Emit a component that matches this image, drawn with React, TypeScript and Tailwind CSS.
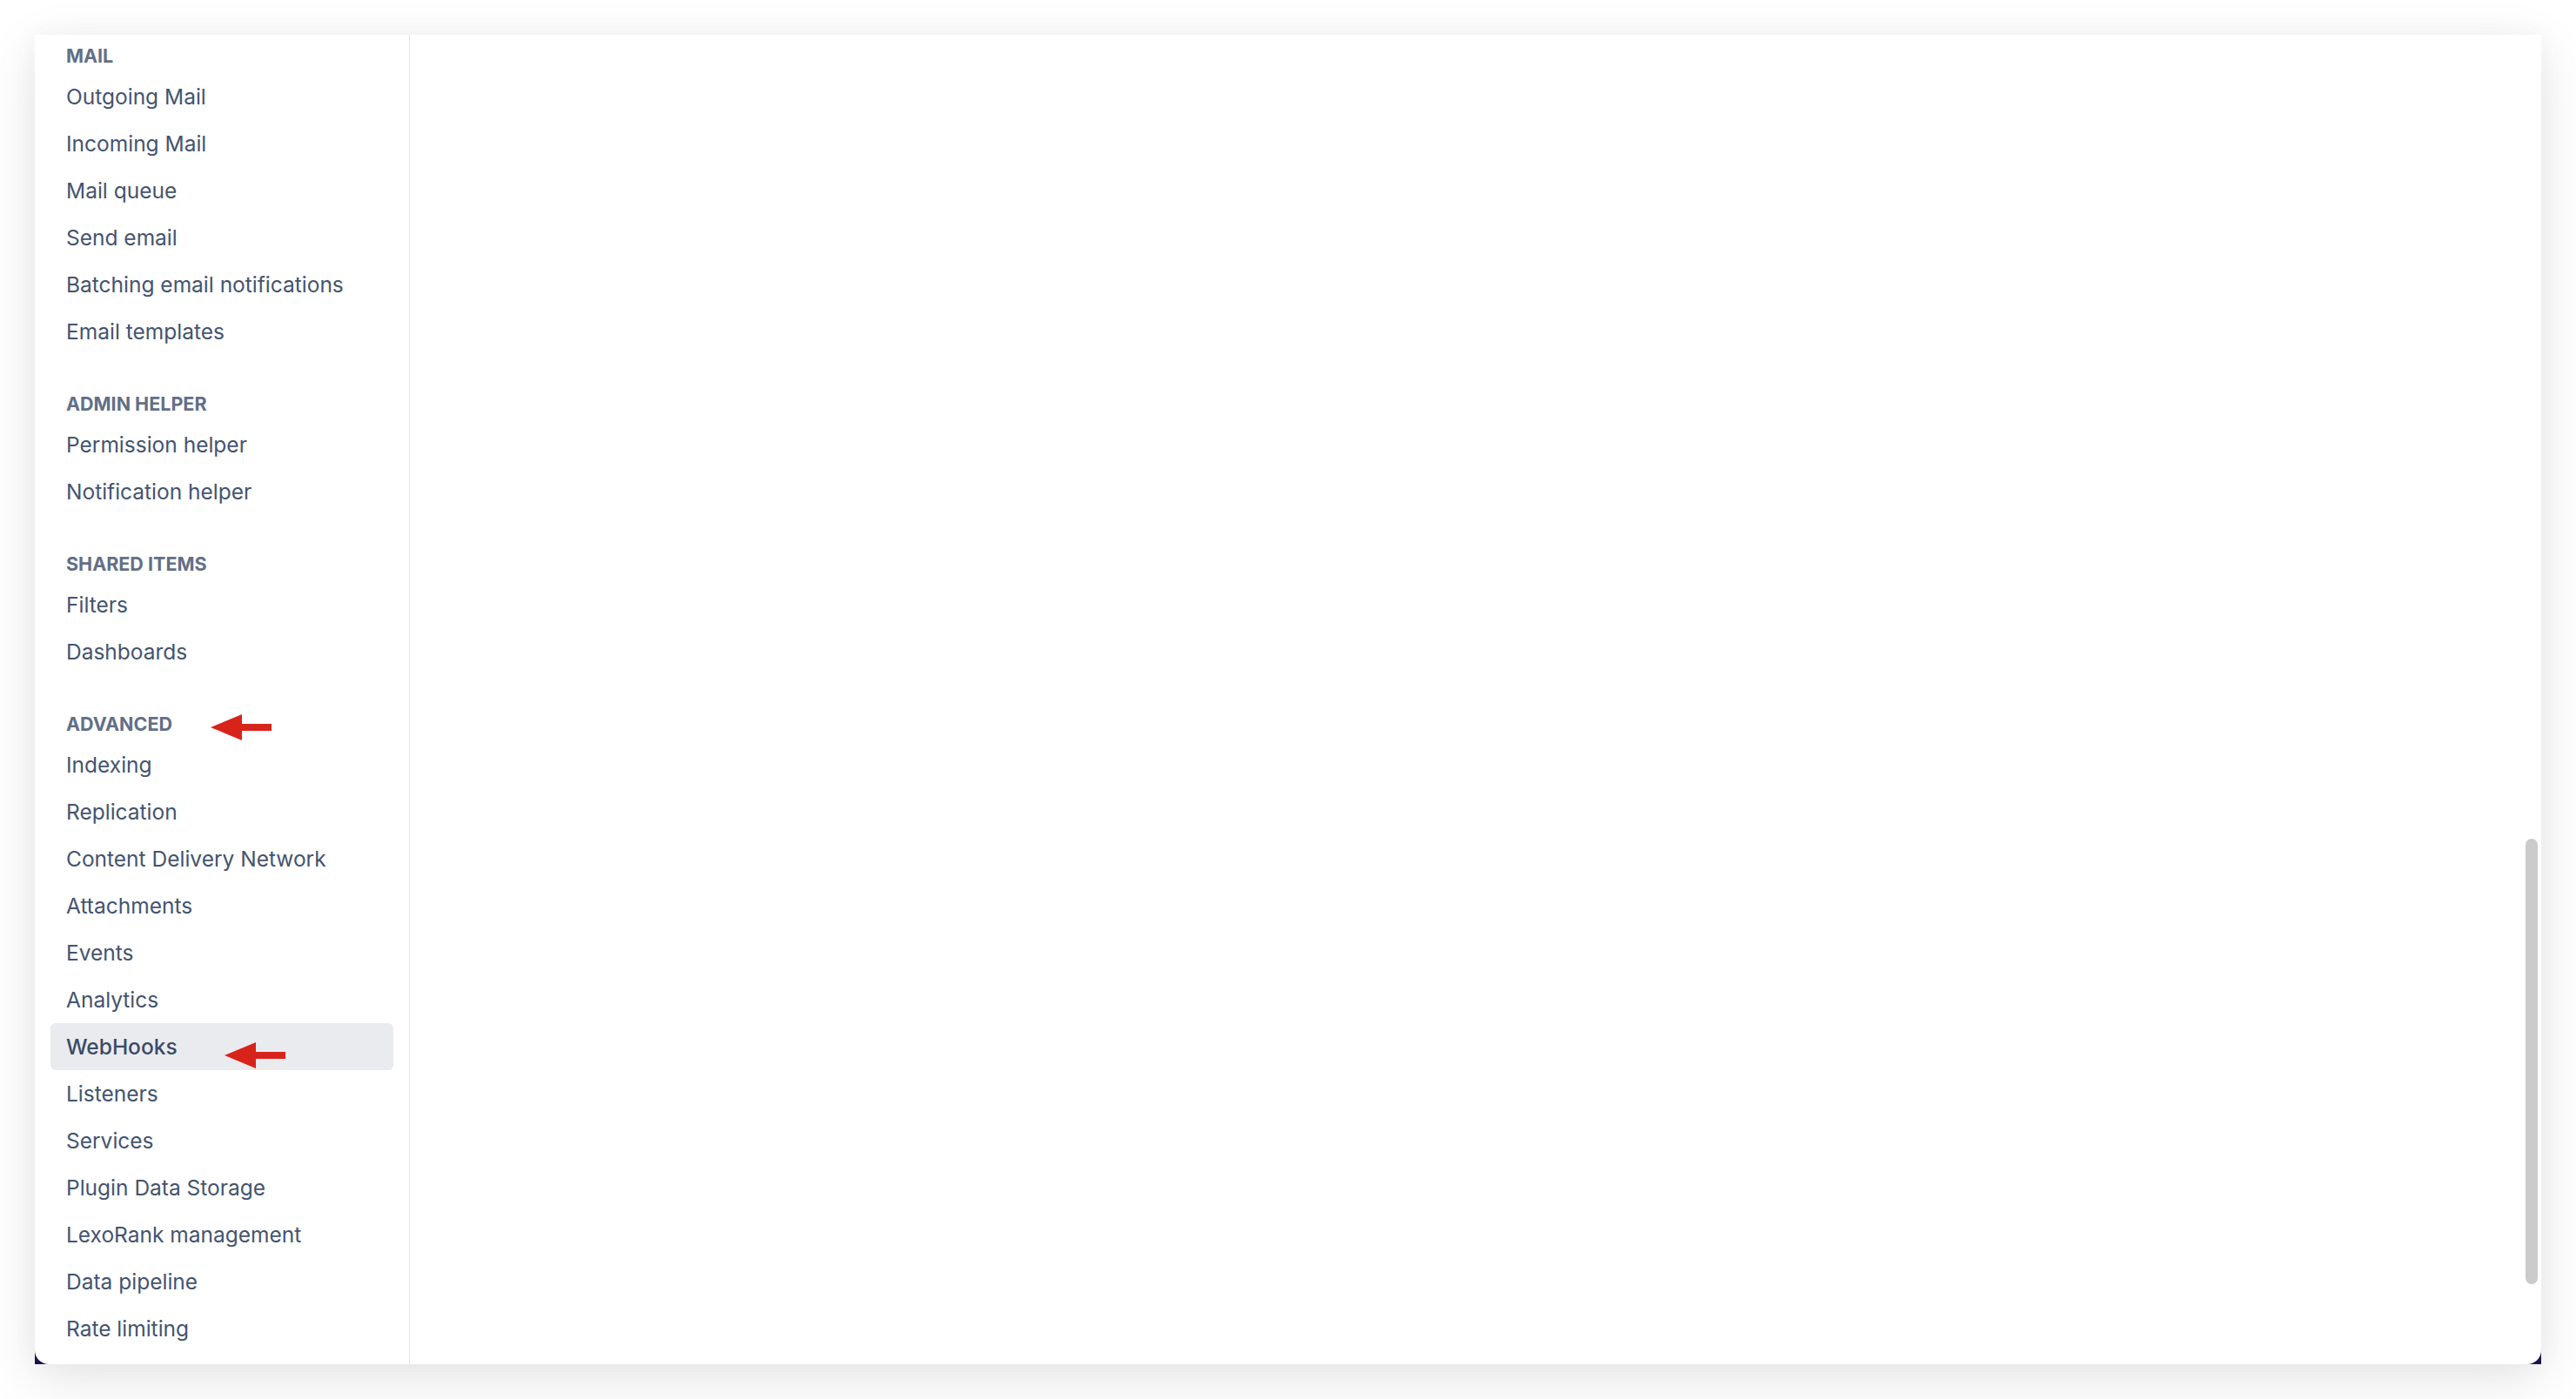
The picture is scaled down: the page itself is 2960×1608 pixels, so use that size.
import React from "react";

type Group = { title: string; items: string[]; arrow?: boolean };

const groups: Group[] = [
  {
    title: "Mail",
    items: [
      "Outgoing Mail",
      "Incoming Mail",
      "Mail queue",
      "Send email",
      "Batching email notifications",
      "Email templates",
    ],
  },
  { title: "Admin helper", items: ["Permission helper", "Notification helper"] },
  { title: "Shared items", items: ["Filters", "Dashboards"] },
  {
    title: "Advanced",
    arrow: true,
    items: [
      "Indexing",
      "Replication",
      "Content Delivery Network",
      "Attachments",
      "Events",
      "Analytics",
      "WebHooks",
      "Listeners",
      "Services",
      "Plugin Data Storage",
      "LexoRank management",
      "Data pipeline",
      "Rate limiting",
    ],
  },
];

function RedArrow() {
  return (
    <svg width="70" height="30" viewBox="0 0 70 30">
      <polygon points="0,15 36,0 36,30" fill="#d8231b" />
      <rect x="34" y="11" width="36" height="8" fill="#d8231b" />
    </svg>
  );
}

export default function App() {
  return (
    <div
      className="w-[2960px] h-[1608px] bg-white pt-[40px] pl-[40px]"
      style={{ fontFamily: "Inter, 'Noto Sans', sans-serif" }}
    >
      <div className="w-[2880px] h-[1528px] bg-[#1e1150] shadow-[0_18px_60px_rgba(0,0,0,0.10),0_0_30px_rgba(0,0,0,0.04)]">
        <div className="relative w-full h-full bg-white rounded-b-[16px] overflow-hidden flex">
          <nav className="w-[431px] h-full border-r border-[#e3e4e8] pt-[4px] flex flex-col">
            {groups.map((g, gi) => (
              <div key={g.title} className={gi === 0 ? "" : "mt-[36px]"}>
                <div className="relative h-[40px] flex items-center pl-[36px] text-[21.5px] font-bold uppercase text-[#626f86]">
                  {g.title}
                  {g.arrow && (
                    <div className="absolute left-[202px] top-[9px]">
                      <RedArrow />
                    </div>
                  )}
                </div>
                {g.items.map((it) => {
                  const active = it === "WebHooks";
                  return (
                    <div
                      key={it}
                      className={
                        active
                          ? "relative mx-[18px] h-[54px] flex items-center pl-[18px] rounded-[6px] bg-[#eaebef] text-[24.5px] font-medium text-[#3b4a66]"
                          : "relative mx-[18px] h-[54px] flex items-center pl-[18px] rounded-[6px] text-[24.5px] text-[#44546f]"
                      }
                    >
                      {it}
                      {active && (
                        <div className="absolute left-[200px] top-[22px]">
                          <RedArrow />
                        </div>
                      )}
                    </div>
                  );
                })}
              </div>
            ))}
          </nav>
          <main className="flex-1 h-full" />
          <div className="absolute right-[4px] top-[924px] w-[14px] h-[512px] rounded-full bg-[#cbcbcb]" />
        </div>
      </div>
    </div>
  );
}
